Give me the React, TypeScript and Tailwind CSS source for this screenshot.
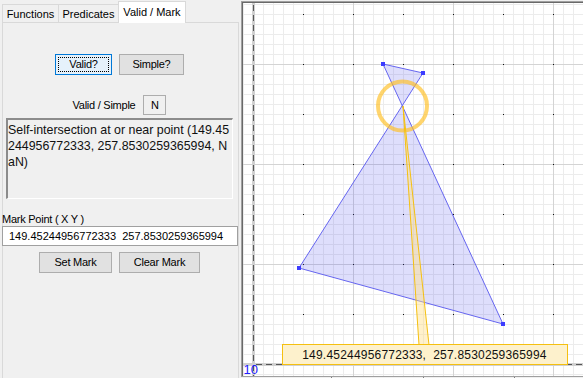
import React from "react";

const ff = "font-['Liberation_Sans',Arial,sans-serif]";

function Canvas() {
  const minorX: number[] = [];
  for (let x = 243; x <= 583; x += 10) minorX.push(x);
  const minorY: number[] = [];
  for (let y = 4; y <= 376; y += 10) minorY.push(y);
  const majorX = [353, 453, 553];
  const majorY = [64, 164, 264];
  const dots: [number, number][] = [];
  for (let x = 303; x <= 583; x += 50)
    for (let y = 14; y <= 364; y += 50) dots.push([x, y]);
  const verts: [number, number][] = [
    [383, 64],
    [423, 73],
    [299, 268],
    [503, 324],
  ];
  return (
    <svg width="340" height="373" viewBox="243 3 340 373" className="block bg-white">
      <g shapeRendering="crispEdges">
        {minorX.map((x) => (
          <line key={"mx" + x} x1={x + 0.5} y1={3} x2={x + 0.5} y2={376} stroke="#ececec" strokeWidth={1} />
        ))}
        {minorY.map((y) => (
          <line key={"my" + y} x1={243} y1={y + 0.5} x2={583} y2={y + 0.5} stroke="#ececec" strokeWidth={1} />
        ))}
        {majorX.map((x) => (
          <line key={"Mx" + x} x1={x + 0.5} y1={3} x2={x + 0.5} y2={376} stroke="#d4d4d4" strokeWidth={1} />
        ))}
        {majorY.map((y) => (
          <line key={"My" + y} x1={243} y1={y + 0.5} x2={583} y2={y + 0.5} stroke="#d4d4d4" strokeWidth={1} />
        ))}
        <line x1={253.5} y1={3} x2={253.5} y2={376} stroke="#d0d0d0" strokeWidth={3} />
        <line x1={243} y1={364.5} x2={583} y2={364.5} stroke="#d0d0d0" strokeWidth={3} />
        <line x1={253.5} y1={5} x2={253.5} y2={376} stroke="#555" strokeWidth={1} strokeDasharray="6 4" />
        <line x1={256} y1={364.5} x2={583} y2={364.5} stroke="#555" strokeWidth={1} strokeDasharray="6 4" />
        {dots.map(([x, y]) => (
          <rect key={"d" + x + "-" + y} x={x} y={y} width={1} height={1} fill="#111" />
        ))}
      </g>
      <polygon
        points={verts.map((v) => v.join(",")).join(" ")}
        fill="rgba(90,90,240,0.2)"
        stroke="#6666f0"
        strokeWidth={1}
      />
      <circle cx={402.5} cy={106} r={24.5} fill="none" stroke="#ffbf20" strokeOpacity={0.65} strokeWidth={4} />
      {verts.map(([x, y]) => (
        <rect key={"v" + x} x={x - 2} y={y - 2} width={4} height={4} fill="#3c3cff" shapeRendering="crispEdges" />
      ))}
      <polygon points="403,106 419,345 429,345" fill="rgba(255,225,140,0.45)" stroke="#f5c010" strokeWidth={1} />
      <rect x={282.5} y={344.5} width={285} height={20} fill="#fdf1cc" stroke="#f5c010" strokeWidth={1} shapeRendering="crispEdges" />
      <text
        x={424.5}
        y={359}
        textAnchor="middle"
        fontFamily="Liberation Sans, Arial, sans-serif"
        fontSize={12}
        letterSpacing={0.2}
        fill="#111"
      >
        {"149.45244956772333,\u00a0\u00a0257.8530259365994"}
      </text>
      <text x={243.5} y={373.5} fontFamily="Liberation Sans, Arial, sans-serif" fontSize={13} fill="#2020ff">
        10
      </text>
    </svg>
  );
}

function Btn({ w, children, focus }: { w: string; children: React.ReactNode; focus?: boolean }) {
  return (
    <div
      className={`${w} h-[21px] relative flex items-center justify-center border text-[11px] text-black ${
        focus ? "border-[#0078d7] bg-[#e5f1fb]" : "border-[#adadad] bg-[#e1e1e1]"
      }`}
    >
      {focus && <span className="absolute inset-[2px] border border-dotted border-black" />}
      <span className="relative">{children}</span>
    </div>
  );
}

export default function App() {
  return (
    <div className={`w-[583px] h-[378px] bg-[#f0f0f0] flex overflow-hidden ${ff} text-[11px] text-black`}>
      <div className="w-[241px] shrink-0 flex flex-col tracking-[-0.25px]">
        <div className="h-[22px] flex items-end pl-[2px] tracking-normal">
          <div className="w-[57px] h-[18px] border border-b-0 border-[#d9d9d9] bg-[#f0f0f0] flex items-center justify-center leading-none pt-[1px]">
            Functions
          </div>
          <div className="w-[61px] h-[18px] -ml-px border border-b-0 border-[#d9d9d9] bg-[#f0f0f0] flex items-center justify-center leading-none pt-[1px]">
            Predicates
          </div>
          <div className="w-[68px] h-[22px] -ml-px -mb-px relative z-10 border border-b-0 border-[#d9d9d9] bg-white flex items-center justify-center leading-none pb-[1px]">
            Valid / Mark
          </div>
        </div>
        <div className="ml-[2px] w-[237px] flex-1 border border-b-0 border-[#d9d9d9] bg-[#f0f0f0] pr-[2px] flex flex-col">
          <div className="mt-[31px] flex justify-center gap-[7px]">
            <Btn w="w-[57px]" focus>
              Valid?
            </Btn>
            <Btn w="w-[65px]">Simple?</Btn>
          </div>
          <div className="mt-[20px] flex justify-center items-center gap-[8px]">
            <span>Valid / Simple</span>
            <div className="w-[23px] h-[20px] border border-[#adadad] flex items-center justify-center">N</div>
          </div>
          <div className="mt-[3px] ml-[3px] w-[227px] h-[81px] border-t-2 border-l-2 border-t-[#8c8c8c] border-l-[#8c8c8c] border-b border-r border-b-white border-r-white bg-[#f0f0f0] pt-[2px] text-[12.4px] leading-[16px] text-[#111] tracking-normal">
            <div>Self-intersection at or near point (149.45</div>
            <div>244956772333, 257.8530259365994, N</div>
            <div>aN)</div>
          </div>
          <div className="mt-[14px] -ml-px h-[13px] leading-[13px]">Mark Point ( X Y )</div>
          <div className="-ml-px w-[236px] h-[20px] border border-[#a0a0a0] bg-white flex items-center pl-[6px] whitespace-pre tracking-normal">
            {"149.45244956772333  257.8530259365994"}
          </div>
          <div className="mt-[6px] flex justify-center gap-[7px]">
            <Btn w="w-[73px]">Set Mark</Btn>
            <Btn w="w-[81px]">Clear Mark</Btn>
          </div>
        </div>
      </div>
      <div className="flex-1 flex flex-col pt-[1px]">
        <div className="border-t border-l border-[#a0a0a0]">
          <div className="border-t border-l border-[#696969]">
            <Canvas />
          </div>
        </div>
        <div className="h-[2px] border-t border-[#a0a0a0] bg-[#f0f0f0] relative">
          <span className="absolute left-[90px] top-0 w-px h-px bg-[#808080]" />
          <span className="absolute left-[182px] top-0 w-px h-px bg-[#808080]" />
          <span className="absolute left-[273px] top-0 w-px h-px bg-[#808080]" />
        </div>
      </div>
    </div>
  );
}
